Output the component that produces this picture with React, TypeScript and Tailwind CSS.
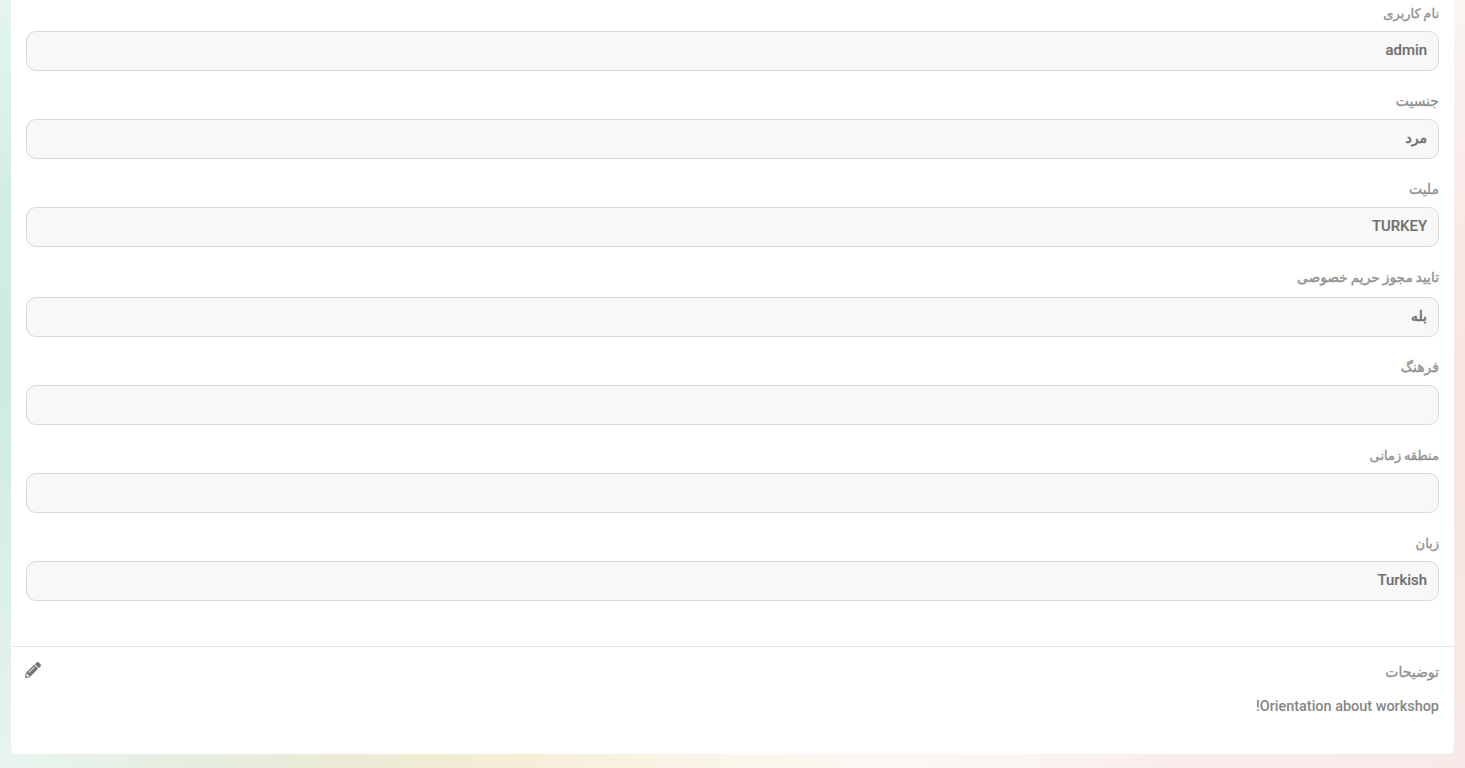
import { FaPencilAlt } from "react-icons/fa";

const farsi = "font-['DejaVu_Sans',sans-serif]";

type Item = { label: string; value: string; latin?: boolean; gap: string; space: string; size: string };

const items: Item[] = [
  { label: "نام کاربری", value: "admin", latin: true, gap: "h-[88px]", space: "mt-2", size: "text-[13px]" },
  { label: "جنسیت", value: "مرد", gap: "h-[88px]", space: "mt-[9px]", size: "text-[14px]" },
  { label: "ملیت", value: "TURKEY", latin: true, gap: "h-[88px]", space: "mt-[9px]", size: "text-[14px]" },
  { label: "تایید مجوز حریم خصوصی", value: "بله", gap: "h-[90px]", space: "mt-[11px]", size: "text-[13.8px]" },
  { label: "فرهنگ", value: "", gap: "h-[88px]", space: "mt-[9px]", size: "text-[14px]" },
  { label: "منطقه زمانی", value: "", gap: "h-[88px]", space: "mt-2", size: "text-[13px]" },
  { label: "زبان", value: "Turkish", latin: true, gap: "h-[88px]", space: "mt-2", size: "text-[13px]" },
];

function Label({ size, children }: { size: string; children: string }) {
  return (
    <div
      className={`${farsi} ${size} h-[18px] whitespace-nowrap leading-[18px] text-[#919191] [-webkit-text-stroke:0.35px_#919191] [word-spacing:-1.5px]`}
    >
      {children}
    </div>
  );
}

function Field({ item }: { item: Item }) {
  return (
    <div className={`${item.gap} flex flex-col justify-end pb-[17px]`}>
      <Label size={item.size}>{item.label}</Label>
      <div
        className={`${item.space} flex h-10 shrink-0 items-center rounded-[10px] border border-[#d9d9d9] bg-[#f8f8f8] px-[11px] text-[#707070]`}
      >
        {item.latin ? (
          <span className="pb-0.5 font-['Roboto',sans-serif] text-[14.9px] font-medium leading-5 [-webkit-text-stroke:0.15px_#707070]">
            {item.value}
          </span>
        ) : (
          <span className={`${farsi} pb-0.5 text-[14px] leading-5 [-webkit-text-stroke:0.6px_#707070]`}>{item.value}</span>
        )}
      </div>
    </div>
  );
}

export default function App() {
  return (
    <div
      dir="rtl"
      className="h-[768px] overflow-hidden bg-[linear-gradient(180deg,#f9f6f3_0,#faecea_160px,#f7e5e2_400px,#f8eae8_768px),linear-gradient(180deg,#e5f5f0_0,#d3ede4_200px,#cdebe1_360px,#ddf0e7_600px,#e8f4ed_768px),linear-gradient(90deg,#e8f5ef_0,#e6eddf_200px,#ecead5_360px,#f3edd5_480px,#f8f1e0_600px,#faf6eb_740px,#fbf8f4_880px,#faf3f1_1060px,#f9eceb_1180px,#f8eae7_1465px)] bg-[length:11px_100%,11px_100%,100%_100%] bg-[position:right_top,left_top,left_top] bg-no-repeat px-[11px] pb-[14px]"
    >
      <main className="flex h-full flex-col justify-end rounded-b-[6px] bg-white">
        <section className="flex flex-col px-[15px] pb-7">
          {items.map((item) => (
            <Field key={item.label} item={item} />
          ))}
        </section>
        <section className="flex h-[108px] shrink-0 items-start justify-between border-t border-[#e7e7e7] pl-[14px] pr-[15px]">
          <div className="pt-4">
            <Label size="text-[14px]">توضیحات</Label>
            <p className="mt-4 font-['Roboto',sans-serif] text-[14.45px] font-medium leading-5 text-[#868686]">
              Orientation about workshop!
            </p>
          </div>
          <FaPencilAlt className="mt-[15px] size-4 text-[#757575]" />
        </section>
      </main>
    </div>
  );
}
